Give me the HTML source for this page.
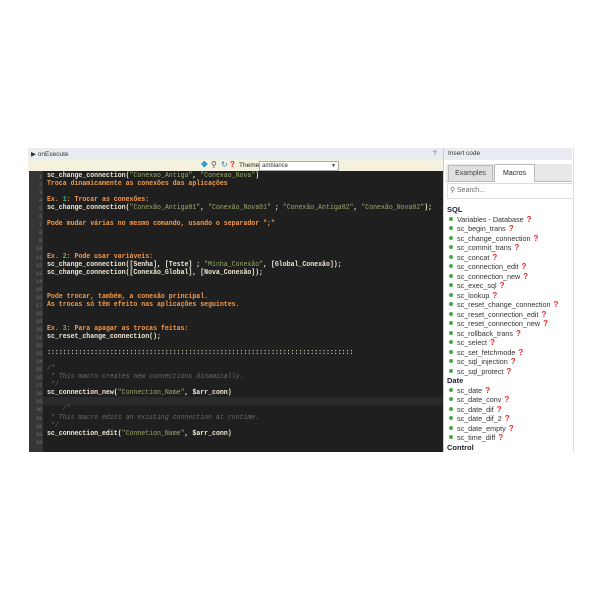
<!DOCTYPE html><html><head><style>
body{margin:0;width:600px;height:600px;background:#fff;position:relative;font-family:"Liberation Sans",sans-serif;overflow:hidden}
.a{position:absolute}
#ed{left:29px;top:171px;width:414px;height:281px;background:#1f1f1f;overflow:hidden}
#gut{left:0;top:0;width:14px;height:281px;background:#353535}
.ln{position:absolute;left:0;width:13px;text-align:right;font:5px "Liberation Mono",monospace;color:#777}
.cl{position:absolute;left:18px;font:6.55px/8px "Liberation Mono",monospace;white-space:pre;color:#efe8d6;font-weight:bold;transform:scaleY(1.15);transform-origin:0 0}
.o{color:#f59a4a}.s{color:#9aaa6a;font-weight:normal}.g{color:#3fc07a}.c{color:#6a6a6a;font-style:italic;font-weight:normal}
.li{position:absolute;left:6px;font-size:7.2px;color:#333;white-space:nowrap}
.li i{display:inline-block;width:4px;height:4px;border-radius:50%;background:#4a4;margin-right:4px;vertical-align:1px}
.li b{color:#e22;font-weight:bold;font-size:8px;margin-left:3px}
.h{position:absolute;left:4px;font-size:7.5px;font-weight:bold;color:#223}
</style></head><body>
<div class="a" style="left:28px;top:148px;width:415px;height:12px;background:#e9ecf1;border-bottom:1px solid #d5d9df"></div>
<div class="a" style="left:31px;top:150px;font-size:6.5px;color:#333">&#9654; onExecute</div>
<div class="a" style="left:433px;top:150px;font-size:6.5px;color:#555">?</div>
<div class="a" style="left:28px;top:160px;width:415px;height:11px;background:#f4f2df"></div>
<div class="a" style="left:201px;top:160px;font-size:8px;color:#1a8fc9;font-weight:bold">&#10021;</div>
<div class="a" style="left:211px;top:160px;font-size:8px;color:#444">&#9906;</div>
<div class="a" style="left:221px;top:160px;font-size:8px;color:#3a7ad0">&#8635;</div>
<div class="a" style="left:230px;top:160px;font-size:8px;color:#e22;font-weight:bold">?</div>
<div class="a" style="left:239px;top:162px;font-size:6.5px;color:#222">Theme</div>
<div class="a" style="left:259px;top:161px;width:76px;height:8px;background:#fff;border:1px solid #aaa;font-size:6px;color:#333;line-height:8px;padding-left:2px;box-sizing:content-box">ambiance<span style="position:absolute;right:2px;font-size:5px">&#9660;</span></div>
<div id="ed" class="a"><div id="gut" class="a"></div>
<div id="lines"></div></div>
<div class="a" style="left:443px;top:148px;width:129px;height:304px;border-left:1px solid #ccc;border-right:1px solid #ddd;background:#fff"></div>
<div class="a" style="left:444px;top:148px;width:128px;height:12px;background:#e9ecf1"></div>
<div class="a" style="left:448px;top:150px;font-size:6.5px;color:#333">Insert code</div>
<div class="a" style="left:446px;top:164px;width:126px;height:17px;background:#e8e8e8;border-bottom:1px solid #bbb"></div>
<div class="a" style="left:448px;top:165px;width:43px;height:15px;background:#e0e0e0;border:1px solid #bbb;font-size:7px;color:#444;text-align:center;line-height:15px">Examples</div>
<div class="a" style="left:494px;top:164px;width:39px;height:17px;background:#fff;border:1px solid #bbb;border-bottom:none;font-size:7px;color:#222;text-align:center;line-height:17px">Macros</div>
<div class="a" style="left:447px;top:183px;width:125px;height:14px;border:1px solid #ddd;font-size:7px;color:#666;line-height:14px">&nbsp;&#9906; Search...</div>
<div class="a" style="left:443px;top:204px;width:129px;height:248px" id="list"></div>
<script>
var L=[
'sc_change_connection(<span class="s">"Conexao_Antiga"</span>, <span class="s">"Conexao_Nova"</span>)',
'<span class="o">Troca dinamicamente as conexões das aplicações</span>','',
'<span class="o">Ex. <span class="g">1</span>: Trocar as conexões:</span>',
'sc_change_connection(<span class="s">"Conexão_Antiga01"</span>, <span class="s">"Conexão_Nova01"</span> ; <span class="s">"Conexão_Antiga02"</span>, <span class="s">"Conexão_Nova02"</span>);','',
'<span class="o">Pode mudar várias no mesmo comando, usando o separador ";"</span>','','','',
'<span class="o">Ex. <span class="g">2</span>: Pode usar variáveis:</span>',
'sc_change_connection([Senha], [Teste] ; <span class="s">"Minha_Conexão"</span>, [Global_Conexão]);',
'sc_change_connection([Conexão_Global], [Nova_Conexão]);','','',
'<span class="o">Pode trocar, também, a conexão principal.</span>',
'<span class="o">As trocas só têm efeito nas aplicações seguintes.</span>','','',
'<span class="o">Ex. <span class="g">3</span>: Para apagar as trocas feitas:</span>',
'sc_reset_change_connection();','',
'::::::::::::::::::::::::::::::::::::::::::::::::::::::::::::::::::::::::::::::','',
'<span class="c">/*</span>','<span class="c"> * This macro creates new connections dinamically.</span>','<span class="c"> */</span>',
'sc_connection_new(<span class="s">"Connection_Name"</span>, $arr_conn)','',
'<span class="c">    /*</span>','<span class="c"> * This macro edits an existing connection at runtime.</span>','<span class="c"> */</span>',
'sc_connection_edit(<span class="s">"Connetion_Name"</span>, $arr_conn)',''];
var h='<div style="position:absolute;left:14px;top:'+(28*8.05+1)+'px;width:400px;height:8px;background:#2a2a2a"></div>';
L.forEach(function(t,i){var y=i*8.05;h+='<div class="ln" style="top:'+(y+3)+'px">'+(i+1)+'</div><div class="cl" style="top:'+y+'px">'+t+'</div>';});
document.getElementById('lines').innerHTML=h;
var M=[['h','SQL'],'Variables - Database','sc_begin_trans','sc_change_connection','sc_commit_trans','sc_concat','sc_connection_edit','sc_connection_new','sc_exec_sql','sc_lookup','sc_reset_change_connection','sc_reset_connection_edit','sc_reset_connection_new','sc_rollback_trans','sc_select','sc_set_fetchmode','sc_sql_injection','sc_sql_protect',['h','Date'],'sc_date','sc_date_conv','sc_date_dif','sc_date_dif_2','sc_date_empty','sc_time_diff',['h','Control']];
var g='';M.forEach(function(m,i){var y=1+i*9.5;if(typeof m!='string')g+='<div class="h" style="top:'+y+'px">'+m[1]+'</div>';else g+='<div class="li" style="top:'+y+'px"><i></i>'+m+'<b>?</b></div>';});
document.getElementById('list').innerHTML=g;
</script>
</body></html>
